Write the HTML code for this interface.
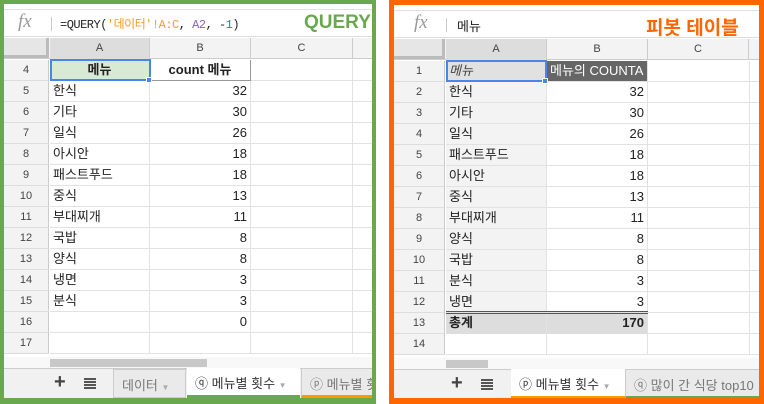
<!DOCTYPE html>
<html><head><meta charset="utf-8"><style>
*{margin:0;padding:0;box-sizing:border-box}
body{width:764px;height:404px;background:#fff;position:relative;overflow:hidden;font-family:"Liberation Sans","Noto Sans CJK KR",sans-serif;font-size:13px;color:#222}
.a{position:absolute}
.panel{position:absolute;top:0;height:404px;overflow:hidden;background:#fff}
.rh{position:absolute;background:#f3f3f3;border-bottom:1px solid #ddd;border-right:1px solid #ccc;font-size:11px;color:#444;text-align:center}
.c{position:absolute;border-bottom:1px solid #e2e2e2;border-right:1px solid #e2e2e2;white-space:nowrap;overflow:hidden;padding:0 3px;line-height:20px}
.r{text-align:right}
.fx{font-family:"Liberation Serif",serif;font-style:italic;color:#999;font-size:19px}
</style></head><body>

<div class="panel" style="left:0;width:376px;border:4px solid #6aa84f;border-bottom-width:6px">
 <div class="a" style="left:0;top:0;width:368px;height:6px;background:#fff;border-bottom:1px solid #e0e0e0"></div>
 <div class="a" style="left:0;top:7px;width:368px;height:26px;border-bottom:1px solid #ddd"></div>
 <div class="a fx" style="left:14px;top:7px">fx</div>
 <div class="a" style="left:47px;top:13px;width:1px;height:14px;background:#ccc"></div>
 <div class="a" style="left:56px;top:11px;font-family:'Liberation Mono','Noto Sans CJK KR',monospace;font-size:12px;letter-spacing:-0.5px">=QUERY(<span style="color:#f59c2f">'데이터'!A:C</span>, <span style="color:#8e64b4">A2</span>, -<span style="color:#3b6fd4">1</span>)</div>
 <div class="a" style="left:300px;top:8px;font-weight:bold;font-size:19px;color:#6aa84f">QUERY</div>
 <div class="a" style="left:0;top:34px;width:368px;height:21px;background:#f3f3f3;border-bottom:1px solid #ccc"></div>
 <div class="a" style="left:0;top:34px;width:45px;height:20px;background:#e6e6e6;border-right:3px solid #bbb;border-bottom:3px solid #bbb"></div>
 <div class="a" style="left:46px;top:34px;width:100px;height:21px;background:#ddd;border-right:1px solid #ccc;text-align:center;font-size:11px;line-height:21px;color:#444">A</div>
 <div class="a" style="left:146px;top:34px;width:101px;height:21px;border-right:1px solid #ccc;text-align:center;font-size:11px;line-height:21px;color:#444">B</div>
 <div class="a" style="left:247px;top:34px;width:102px;height:21px;border-right:1px solid #ccc;text-align:center;font-size:11px;line-height:21px;color:#444">C</div>
 <div id="L"></div>
 <div class="a" style="left:0;top:353px;width:368px;height:11px;background:#f8f8f8"></div>
 <div class="a" style="left:46px;top:355px;width:157px;height:8px;background:#c8c8c8"></div>
 <div class="a" style="left:0;top:364px;width:368px;height:30px;background:#f1f1f1;border-top:1px solid #ccc"></div>
 <div class="a" style="left:50px;top:367px;font-size:20px;font-weight:bold;color:#444">+</div>
 <div class="a" style="left:80px;top:374px;width:12px;height:11px;background:repeating-linear-gradient(#555 0 2px,transparent 2px 3px)"></div>
 <div class="a" style="left:109px;top:365px;width:73px;height:29px;background:#eaeaea;border:1px solid #ccc;color:#777;padding:5px 0 0 8px">데이터 <span style="font-size:8px;color:#aaa">▼</span></div>
 <div class="a" style="left:183px;top:364px;width:113px;height:30px;background:#fff;border-bottom:3px solid #6aa84f;padding:5px 0 0 8px;color:#333">ⓠ 메뉴별 횟수 <span style="font-size:8px;color:#aaa">▼</span></div>
 <div class="a" style="left:297px;top:365px;width:80px;height:29px;background:#eaeaea;border-left:1px solid #ccc;border-bottom:3px solid #ff9900;padding:5px 0 0 8px;color:#777;white-space:nowrap">ⓟ 메뉴별 횟</div>
</div>

<div class="panel" style="left:389px;width:375px;border:5px solid #ff6600;border-bottom-width:6px">
 <div class="a" style="left:0;top:0;width:366px;height:6px;border-bottom:1px solid #e0e0e0"></div>
 <div class="a" style="left:0;top:7px;width:366px;height:26px;border-bottom:1px solid #ddd"></div>
 <div class="a fx" style="left:20px;top:7px">fx</div>
 <div class="a" style="left:52px;top:13px;width:1px;height:14px;background:#ccc"></div>
 <div class="a" style="left:63px;top:11px;font-size:13px">메뉴</div>
 <div class="a" style="left:252px;top:8px;font-weight:bold;font-size:19px;color:#ff6600">피봇 테이블</div>
 <div class="a" style="left:0;top:34px;width:366px;height:21px;background:#f3f3f3;border-bottom:1px solid #ccc"></div>
 <div class="a" style="left:0;top:34px;width:51px;height:20px;background:#e6e6e6;border-right:3px solid #bbb;border-bottom:3px solid #bbb"></div>
 <div class="a" style="left:52px;top:34px;width:101px;height:21px;background:#ddd;border-right:1px solid #ccc;text-align:center;font-size:11px;line-height:21px;color:#444">A</div>
 <div class="a" style="left:153px;top:34px;width:101px;height:21px;border-right:1px solid #ccc;text-align:center;font-size:11px;line-height:21px;color:#444">B</div>
 <div class="a" style="left:254px;top:34px;width:101px;height:21px;border-right:1px solid #ccc;text-align:center;font-size:11px;line-height:21px;color:#444">C</div>
 <div id="R"></div>
 <div class="a" style="left:0;top:353px;width:366px;height:11px;background:#f8f8f8"></div>
 <div class="a" style="left:52px;top:355px;width:42px;height:8px;background:#c8c8c8"></div>
 <div class="a" style="left:0;top:364px;width:366px;height:30px;background:#f1f1f1;border-top:1px solid #ccc"></div>
 <div class="a" style="left:57px;top:367px;font-size:20px;font-weight:bold;color:#444">+</div>
 <div class="a" style="left:87px;top:374px;width:12px;height:11px;background:repeating-linear-gradient(#555 0 2px,transparent 2px 3px)"></div>
 <div class="a" style="left:117px;top:364px;width:114px;height:30px;background:#fff;border-bottom:3px solid #ff9900;padding:5px 0 0 8px;color:#333">ⓟ 메뉴별 횟수 <span style="font-size:8px;color:#aaa">▼</span></div>
 <div class="a" style="left:231px;top:365px;width:140px;height:29px;background:#eaeaea;border-left:1px solid #ccc;border-bottom:3px solid #6aa84f;padding:5px 0 0 8px;color:#777;white-space:nowrap">ⓠ 많이 간 식당 top10</div>
</div>

<script>
function rows(id,start,startTop,hw,data,pivot){
 let h='';
 data.forEach((d,i)=>{
  const t=startTop+i*21, n=start+i;
  h+=`<div class="rh" style="left:0;top:${t}px;width:${hw}px;height:21px;line-height:20px">${n}</div>`;
  let sa='',sb='',right=true;
  if(d[2]=='h'){ right=false; sa=pivot?'background:#e1e1e1;font-style:italic;color:#444':'background:#d9ead3;text-align:center;font-weight:bold';
     sb=pivot?'background:#666;color:#fff;padding-left:3px':'font-weight:bold;text-align:center;border-right:1px solid #999;border-bottom:1px solid #999';}
  else if(d[2]=='t'){sa='background:#ddd;font-weight:bold;border-bottom:none';sb='background:#ddd;font-weight:bold;border-bottom:none';}
  else if(pivot&&d[0]!==''){sa='background:#f3f3f3';}
  const cw=pivot?101:100, cl=hw+1;
  h+=`<div class="c" style="left:${cl}px;top:${t}px;width:${cw}px;height:21px;${sa}">${d[0]}</div>`;
  h+=`<div class="c ${right?'r':''}" style="left:${cl+cw}px;top:${t}px;width:101px;height:21px;${sb}">${d[1]}</div>`;
  h+=`<div class="c" style="left:${cl+cw+101}px;top:${t}px;width:102px;height:21px"></div>`;
  h+=`<div class="c" style="left:${cl+cw+203}px;top:${t}px;width:40px;height:21px"></div>`;
  if(d[2]=='t') h+=`<div class="a" style="left:${cl}px;top:${t-2}px;width:202px;height:3px;border-top:1px solid #555;border-bottom:1px solid #555"></div>`;
 });
 h+=`<div class="a" style="left:${hw+1}px;top:55px;width:101px;height:22px;border:2px solid #4a86e8"></div><div class="a" style="left:${hw+97}px;top:73px;width:6px;height:6px;background:#4a86e8;border:1px solid #fff"></div>`;
 document.getElementById(id).outerHTML=h;
}
rows('L',4,56,45,[['메뉴','count 메뉴','h'],['한식',32],['기타',30],['일식',26],['아시안',18],['패스트푸드',18],['중식',13],['부대찌개',11],['국밥',8],['양식',8],['냉면',3],['분식',3],['','0'],['','']],false);
rows('R',1,56,51,[['메뉴','메뉴의 COUNTA','h'],['한식',32],['기타',30],['일식',26],['패스트푸드',18],['아시안',18],['중식',13],['부대찌개',11],['양식',8],['국밥',8],['분식',3],['냉면',3],['총계','170','t'],['','']],true);
</script>
</body></html>
